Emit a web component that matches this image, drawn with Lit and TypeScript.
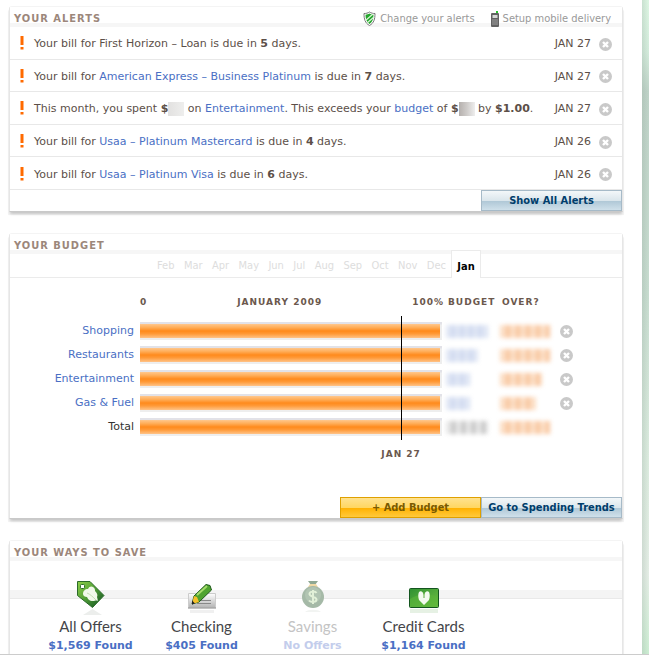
import { LitElement, html, css, svg, nothing } from "lit";
import { customElement } from "lit/decorators.js";
import { classMap } from "lit/directives/class-map.js";
import { styleMap } from "lit/directives/style-map.js";

const base = css`
  * { box-sizing: border-box; }
  a { color: #4a6fc4; text-decoration: none; }
  button { font: inherit; margin: 0; padding: 0; cursor: pointer; }
  .dismiss {
    display: block;
    width: 13px;
    height: 13px;
    border: 0;
    background: none;
  }
  .dismiss svg { display: block; }
  .action {
    width: 141px;
    height: 21px;
    border: 1px solid #a6bac8;
    background: linear-gradient(#f3f7f9 0, #dbe6ec 50%, #afc7d6 52%, #cfe0ea 100%);
    color: #003d6b;
    font: bold 11px/17px "DejaVu Sans Condensed", "DejaVu Sans", sans-serif;
    white-space: nowrap;
  }
  .action.add {
    border-color: #dfa000;
    background: linear-gradient(#ffe28f 0, #ffd763 50%, #ffb100 52%, #ffc93c 100%);
    color: #7a5a00;
  }
`;

const dismissIcon = html`<svg width="13" height="13" viewBox="0 0 13 13" aria-hidden="true">
  <circle cx="6.500" cy="6.500" r="6.500" fill="#c9c9c9" />
  <path d="M4 4l5 5M9 4l-5 5" stroke="#fff" stroke-width="2.400" />
</svg>`;

@customElement("app-panel")
class AppPanel extends LitElement {
  static properties = { heading: { type: String } };
  declare heading: string;
  static styles = [
    base,
    css`
      :host {
        display: block;
        background: #fff;
        border: 1px solid #e6e6e6;
        border-top-color: #f4f4f4;
        border-bottom-color: #c9c9c9;
        border-radius: 3px 3px 0 0;
        box-shadow: 0 3px 3px -1px rgba(0, 0, 0, 0.2), -1px 3px 0 #f5f5f5, 1px 3px 0 #f5f5f5;
      }
      .head {
        display: flex;
        justify-content: space-between;
        align-items: center;
        height: 20px;
        padding: 3px 11px 0 4px;
        background: linear-gradient(#fff 16px, #f6f6f6 16px);
      }
      h2 {
        margin: 0;
        color: #9c877b;
        font: bold 11px/16px "DejaVu Sans Condensed", "DejaVu Sans", sans-serif;
        letter-spacing: 1px;
      }
    `,
  ];
  render() {
    return html`<div class="head"><h2>${this.heading}</h2><slot name="tools"></slot></div><slot></slot>`;
  }
}

const alerts = [
  { text: html`Your bill for First Horizon – Loan is due in <b>5</b> days.`, date: "JAN 27" },
  { text: html`Your bill for <a href="#">American Express – Business Platinum</a> is due in <b>7</b> days.`, date: "JAN 27" },
  {
    text: html`This month, you spent <b>$</b><span class="hidden"></span> on <a href="#">Entertainment</a>. This exceeds your <a href="#">budget</a> of <b>$</b><span class="hidden dark"></span> by <b>$1.00</b>.`,
    date: "JAN 27",
  },
  { text: html`Your bill for <a href="#">Usaa – Platinum Mastercard</a> is due in <b>4</b> days.`, date: "JAN 26" },
  { text: html`Your bill for <a href="#">Usaa – Platinum Visa</a> is due in <b>6</b> days.`, date: "JAN 26" },
];

@customElement("alerts-panel")
class AlertsPanel extends LitElement {
  static styles = [
    base,
    css`
      :host { display: block; }
      .tools { display: flex; gap: 16px; }
      .tools a {
        display: flex;
        align-items: center;
        gap: 4px;
        color: #999;
        font: 11px/16px "DejaVu Sans Condensed", "DejaVu Sans", sans-serif;
      }
      ul {
        list-style: none;
        margin: 0;
        padding: 0;
        display: grid;
        grid-auto-rows: 1fr;
        min-height: 163px;
      }
      li {
        display: flex;
        align-items: center;
        padding: 3px 10px 0;
        border-bottom: 1px solid #e8e8e8;
      }
      .mark { flex: none; margin: 0 10px 2px 0; }
      .text { flex: 1; white-space: nowrap; }
      .date { margin-right: 8px; }
      .hidden {
        display: inline-block;
        width: 16px;
        height: 14px;
        margin: -2px 0;
        vertical-align: middle;
        background: linear-gradient(90deg, #e2e1e0, #eeeeed);
      }
      .dark { background: linear-gradient(90deg, #b5b0ad, #cfccca 50%, #eee); }
      .foot { display: flex; justify-content: flex-end; }
    `,
  ];
  render() {
    return html`<app-panel heading="YOUR ALERTS">
      <nav class="tools" slot="tools">
        <a href="#">
          <svg width="13" height="16" viewBox="0 0 13 16" aria-hidden="true">
            <path d="M6.500 1C5 2 3 2.600 1 2.500 1 8 2 12 6.500 14.500 11 12 12 8 12 2.500 10 2.600 8 2 6.500 1z" fill="#fff" stroke="#777" />
            <path d="M6.500 2.500C5.500 3.200 4 3.700 2.500 3.700 2.600 8 3.500 11 6.500 13 9.500 11 10.400 8 10.500 3.700 9 3.700 7.500 3.200 6.500 2.500z" fill="#23a52b" />
            <path d="M2.500 9.500L10 3M4 12L11 6" stroke="#d9f5d6" stroke-width="1.200" />
          </svg>
          Change your alerts</a>
        <a href="#">
          <svg width="8" height="16" viewBox="0 0 8 16" aria-hidden="true">
            <path d="M5 0h2v3H5z" fill="#25c52b" />
            <rect x="0" y="2" width="8" height="14" rx="1" fill="#626262" />
            <path d="M1.500 4h5v3h-5z" fill="#d5d8d5" />
            <path d="M1.500 9h5M1.500 11h5M1.500 13h5" stroke="#ddd" stroke-dasharray="1 1" />
          </svg>
          Setup mobile delivery</a>
      </nav>
      <ul>
        ${alerts.map(
          (a) => html`<li>
            <svg class="mark" width="4" height="14" viewBox="0 0 4 14" aria-hidden="true">
              <path d="M.5 0h3v9h-3zM.5 11h3v2.500h-3z" fill="#ff6a00" />
            </svg>
            <span class="text">${a.text}</span>
            <span class="date">${a.date}</span>
            <button class="dismiss" aria-label="Dismiss alert">${dismissIcon}</button>
          </li>`
        )}
      </ul>
      <div class="foot"><button class="action">Show All Alerts</button></div>
    </app-panel>`;
  }
}

const pastMonths = ["Feb", "Mar", "Apr", "May", "Jun", "Jul", "Aug", "Sep", "Oct", "Nov", "Dec"];
const budgets = [
  { name: "Shopping", fill: 100, budget: 42, over: 50 },
  { name: "Restaurants", fill: 100, budget: 32, over: 50 },
  { name: "Entertainment", fill: 100, budget: 24, over: 42 },
  { name: "Gas & Fuel", fill: 100, budget: 24, over: 36 },
  { name: "Total", fill: 100, budget: 42, over: 50, total: true },
];

@customElement("budget-panel")
class BudgetPanel extends LitElement {
  static styles = [
    base,
    css`
      :host { display: block; }
      .months {
        display: flex;
        height: 28px;
        margin-top: -4px;
        padding-left: 147px;
        border-bottom: 1px solid #ebebeb;
      }
      .past {
        display: flex;
        justify-content: space-between;
        width: 289px;
        margin-right: 5px;
      }
      .months button {
        padding: 4px 0 0;
        border: 0;
        background: none;
        color: #ddd;
        font: 11px/16px "DejaVu Sans Condensed", "DejaVu Sans", sans-serif;
      }
      .months .current {
        width: 30px;
        height: 28px;
        background: #fff;
        border: 1px solid #ebebeb;
        border-bottom: 0;
        color: #000;
        font-weight: bold;
      }
      .chart { position: relative; padding: 16px 0 58px; }
      table { width: 100%; border-collapse: collapse; table-layout: fixed; }
      .c-name { width: 130px; }
      .c-budget { width: 54px; }
      .c-over { width: 60px; }
      .c-close { width: 62px; }
      th, td { padding: 0; text-align: left; height: 24px; }
      thead th { height: 25px; vertical-align: top; }
      thead th, .today {
        color: #6b584d;
        font: bold 9px/17px "DejaVu Sans", sans-serif;
        letter-spacing: 1px;
      }
      thead .num { padding-left: 2px; }
      .axis { display: flex; justify-content: space-between; padding-right: 2px; }
      tbody th { padding-right: 6px; text-align: right; font-weight: normal; color: #333; }
      .track {
        margin-right: 4px;
        height: 18px;
        padding: 2px 2px 2px 0;
        background: linear-gradient(#e2e2e8 2px, #eeeeee 3px);
      }
      .bar {
        height: 14px;
        background: linear-gradient(#ffc78d, #ffad58 25%, #ff8a1c 50%, #ff9a38 70%, #ffc388);
      }
      .smudge {
        display: block;
        height: 13px;
        opacity: 0.7;
        filter: blur(2px);
        background: repeating-linear-gradient(90deg, #d3dcf0 0 5px, #bccbea 5px 9px);
      }
      .over { background: repeating-linear-gradient(90deg, #fad0ac 0 6px, #f5ae78 6px 10px); }
      .grey { background: repeating-linear-gradient(90deg, #ddd 0 5px, #b4b4b4 5px 10px); }
      .spot {
        position: absolute;
        inset: 38px 176px 0 130px;
        pointer-events: none;
      }
      .today {
        position: absolute;
        left: 85%;
        top: 0;
        width: 60px;
        margin-left: -29px;
        text-align: center;
      }
      .today::before {
        content: "";
        display: block;
        width: 1px;
        height: 124px;
        margin: 0 auto 6px;
        background: #000;
      }
      .foot { display: flex; justify-content: flex-end; }
    `,
  ];
  render() {
    return html`<app-panel heading="YOUR BUDGET">
      <div class="months">
        <div class="past">${pastMonths.map((m) => html`<button>${m}</button>`)}</div>
        <button class="current">Jan</button>
      </div>
      <div class="chart">
        <table>
          <colgroup>
            <col class="c-name" /><col /><col class="c-budget" /><col class="c-over" /><col class="c-close" />
          </colgroup>
          <thead>
            <tr>
              <th></th>
              <th><div class="axis"><span>0</span><span>JANUARY 2009</span><span>100%</span></div></th>
              <th class="num">BUDGET</th>
              <th class="num">OVER?</th>
              <th></th>
            </tr>
          </thead>
          <tbody>
            ${budgets.map(
              (b) => html`<tr>
                <th scope="row">${b.total ? b.name : html`<a href="#">${b.name}</a>`}</th>
                <td><div class="track"><div class="bar" style=${styleMap({ width: b.fill + "%" })}></div></div></td>
                <td><span class=${classMap({ smudge: true, grey: !!b.total })} style=${styleMap({ width: b.budget + "px" })}></span></td>
                <td><span class="smudge over" style=${styleMap({ width: b.over + "px" })}></span></td>
                <td>${b.total ? nothing : html`<button class="dismiss" aria-label="Remove budget">${dismissIcon}</button>`}</td>
              </tr>`
            )}
          </tbody>
        </table>
        <div class="spot"><div class="today">JAN 27</div></div>
      </div>
      <div class="foot">
        <button class="action add">+ Add Budget</button>
        <button class="action">Go to Spending Trends</button>
      </div>
    </app-panel>`;
  }
}

const icons = {
  tag: svg`<defs><linearGradient id="t" x2="1" y2="1"><stop offset="0" stop-color="#8ed04a" /><stop offset=".5" stop-color="#4d9a35" /><stop offset="1" stop-color="#0c4a20" /></linearGradient></defs>
    <path d="M3.500 2.500h12.500L30 16.500 18.500 28.500 3.500 16.500z" fill="url(#t)" stroke="#2c6b2a" />
    <rect x="6.500" y="5.500" width="4" height="4" rx="1" fill="#fff" stroke="#2c6b2a" />
    <path d="M9 15C9 12 11 10 14 10C15 7 18 7 19 8C21 9 21 11 21 12C23 14 24 16 23 18L24 22C22 21 21 22 19 22C15 22 14 20 13 18C11 18 9 17 9 15z" fill="#f1f9ea" />
    <path d="M13 14C16 15 19 18 22 21" fill="none" stroke="#c3dfb2" />
    <path d="M9 36l9.500-6 9.500 6z" fill="#eceeec" />`,
  check: svg`<defs><linearGradient id="c" x2="0" y2="1"><stop offset="0" stop-color="#fff" /><stop offset="1" stop-color="#b5b5b5" /></linearGradient></defs>
    <path d="M3.500 14.500h27v14h-27z" fill="url(#c)" stroke="#ccc" /><path d="M3 29h28" stroke="#888" />
    <path d="M15 21.500h11M12 24.500h14" stroke="#888" />
    <path d="M7 25l2-8L21 5.500l4 1 1.500 4.500L14 23z" fill="#4fa32f" stroke="#1f5a1c" />
    <path d="M12 16L22 7" stroke="#a5dc6a" stroke-width="2" />
    <path d="M7 25l2-8 3 1 2 5z" fill="#f5c02b" /><path d="M7 25.500l0-4 3 3z" fill="#222" />
    <path d="M5 31h24v3H5z" fill="#f0f0f0" />`,
  bag: svg`<path d="M12 2h10l-3 4h-4z" fill="#8fa893" /><path d="M14 5h6l2 3h-10z" fill="#f0d9a5" />
    <circle cx="17" cy="18" r="11" fill="#a5b9a7" /><circle cx="17" cy="16" r="8" fill="#b1c4b2" />
    <path d="M20.500 14c-1-2-7-2-7 1s7 2.500 7 5.500-6 3-7.500 1M17 11v14" fill="none" stroke="#e2f0d8" stroke-width="2" />
    <path d="M9 33c3-3 13-3 16 0z" fill="#f2f4f2" />`,
  card: svg`<defs><linearGradient id="k" x2="1" y2="1"><stop offset="0" stop-color="#2f9132" /><stop offset="1" stop-color="#72c043" /></linearGradient></defs>
    <rect x="2.500" y="9.500" width="29" height="19" rx="1" fill="url(#k)" stroke="#14551f" />
    <path d="M3 20c8-6 20-6 28-2v10H3z" fill="#5cb53a" opacity=".6" />
    <path d="M12 13C14 11 16 13 17 16C18 13 20 11 22 13C23 15 23 18 22 21L17 26L12 21C11 18 11 15 12 13z" fill="#f3faef" /><path d="M17 13v6" stroke="#5cab3c" />
    <path d="M3 30h28v4H3z" fill="#e6f1e4" />`,
};

const offers = [
  { icon: icons.tag, name: "All Offers", found: "$1,569 Found" },
  { icon: icons.check, name: "Checking", found: "$405 Found" },
  { icon: icons.bag, name: "Savings", found: "No Offers", empty: true },
  { icon: icons.card, name: "Credit Cards", found: "$1,164 Found" },
];

@customElement("save-panel")
class SavePanel extends LitElement {
  static styles = [
    base,
    css`
      :host { display: block; }
      .offers {
        display: grid;
        grid-template-columns: repeat(4, 111px);
        padding: 18px 0 4px 25px;
        background: linear-gradient(#fff 29px, #f4f4f4 29px 37px, #e9e9e9 37px 38px, #fff 38px);
      }
      .offer { display: flex; flex-direction: column; align-items: center; }
      .name {
        margin-top: -1px;
        color: #444549;
        font: 15px/24px Lato, sans-serif;
      }
      .found { font-weight: bold; line-height: 16px; }
      .empty .name { color: #c4c4c4; }
      .empty .found { color: #c3cdec; }
    `,
  ];
  render() {
    return html`<app-panel heading="YOUR WAYS TO SAVE">
      <div class="offers">
        ${offers.map(
          (o) => html`<a href="#" class=${classMap({ offer: true, empty: !!o.empty })}>
            <svg width="34" height="36" viewBox="0 0 34 36" aria-hidden="true">${o.icon}</svg>
            <span class="name">${o.name}</span>
            <span class="found">${o.found}</span>
          </a>`
        )}
      </div>
    </app-panel>`;
  }
}

@customElement("app-root")
class AppRoot extends LitElement {
  static styles = css`
    :host {
      display: flex;
      box-sizing: border-box;
      height: 100vh;
      overflow: hidden;
      border-bottom: 1px solid #ccc;
      background: #fff;
      color: #5c4f48;
      font: 11px/16px "DejaVu Sans", sans-serif;
    }
    main {
      flex: 1;
      min-width: 0;
      display: flex;
      flex-direction: column;
      gap: 21px;
      padding: 6px 19px 0 9px;
    }
    .edge {
      flex: none;
      width: 7px;
      background: linear-gradient(90deg, rgba(140, 160, 150, 0.25), transparent),
        linear-gradient(#def7e4 0, #d4ecdc 8%, #bfd3c8 14%, #c8ddd0 45%, #dcecdf 70%, #e5eee6 88%, #cdeed3 100%);
    }
  `;
  render() {
    return html`<main><alerts-panel></alerts-panel><budget-panel></budget-panel><save-panel></save-panel></main>
      <div class="edge"></div>`;
  }
}
